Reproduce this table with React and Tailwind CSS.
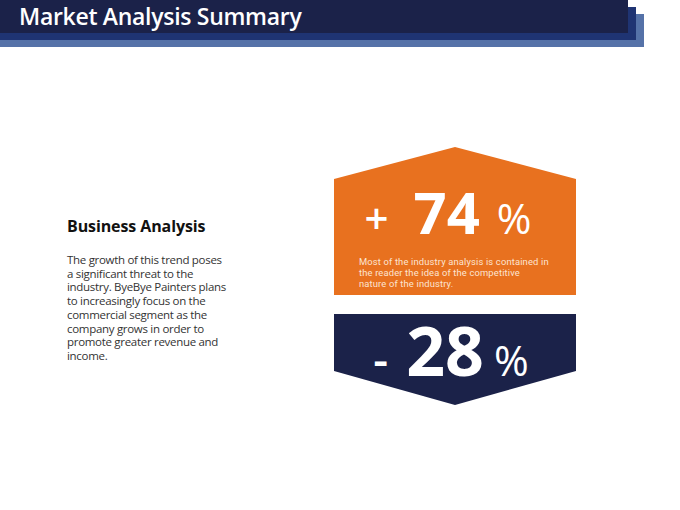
export default function App() {
  const font = { fontFamily: '"Open Sans", "Noto Sans", sans-serif' };
  return (
    <div className="w-[680px] h-[510px] bg-white overflow-hidden flex flex-col" style={font}>
      <div className="-ml-5 w-[648px] h-[33px] bg-[#1b2249] shadow-[8px_7px_0_#1f3473,16px_14px_0_#5572a8] flex items-center pl-[39px]">
        <span className="text-white font-semibold text-[23px] leading-none tracking-[-0.3px] whitespace-nowrap">
          Market Analysis Summary
        </span>
      </div>
      <div className="flex pt-[114px] pl-[67px]">
        <div className="w-[267px] pt-[69px]">
          <h2 className="font-bold text-[16px] leading-[20px] text-[#111] tracking-[-0.1px]">Business Analysis</h2>
          <p className="mt-[17px] text-[11.5px] leading-[13.7px] text-[#333] tracking-[-0.3px] whitespace-nowrap">
            The growth of this trend poses<br />
            a significant threat to the<br />
            industry. ByeBye Painters plans<br />
            to increasingly focus on the<br />
            commercial segment as the<br />
            company grows in order to<br />
            promote greater revenue and<br />
            income.
          </p>
        </div>
        <div className="w-[242px] flex flex-col gap-[19px]">
          <div className="h-[148px] bg-[#e8711f] [clip-path:polygon(50%_0,100%_32px,100%_100%,0_100%,0_32px)] flex flex-col pt-[36px]">
            <div className="flex justify-center items-baseline text-white leading-none whitespace-nowrap pr-[14px]">
              <span className="text-[42px] font-semibold">+</span>
              <span className="text-[58px] font-bold ml-[25px]">74</span>
              <span className="text-[42px] font-normal ml-[17px]">%</span>
            </div>
            <p className="mt-[15px] pl-[25px] text-[9.4px] leading-[11px] tracking-[0.15px] text-[#fce4d2] whitespace-nowrap [font-family:Roboto,'Open_Sans',sans-serif]">
              Most of the industry analysis is contained in<br />
              the reader the idea of the competitive<br />
              nature of the industry.
            </p>
          </div>
          <div className="h-[91px] bg-[#1b2249] [clip-path:polygon(0_0,100%_0,100%_57px,50%_100%,0_57px)] flex justify-center items-start pt-[2px] pr-[8px]">
            <div className="flex items-baseline text-white leading-none whitespace-nowrap">
              <span className="text-[46px] font-semibold">-</span>
              <span className="text-[68px] font-bold ml-[18px]">28</span>
              <span className="text-[42px] font-normal ml-[10px]">%</span>
            </div>
          </div>
        </div>
      </div>
    </div>
  );
}
